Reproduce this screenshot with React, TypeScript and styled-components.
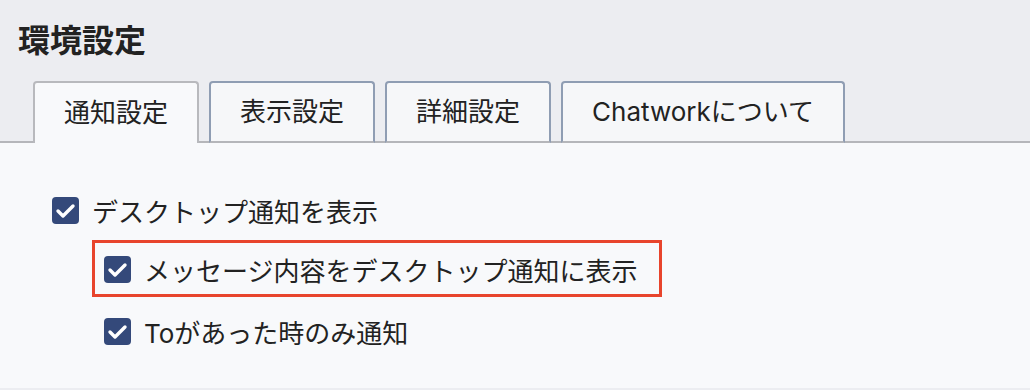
import styled, { createGlobalStyle } from "styled-components";

const GlobalStyle = createGlobalStyle`
  html, body {
    margin: 0;
    padding: 0;
    background: #ecedf1;
  }
  body {
    font-family: "Inter", "Noto Sans CJK JP", sans-serif;
    color: #222;
  }
`;

const tabs = ["通知設定", "表示設定", "詳細設定", "Chatworkについて"];

const CheckIcon = () => (
  <svg width="27" height="27" viewBox="0 0 27 27">
    <rect width="27" height="27" rx="4" fill="#34497a" />
    <path
      d="M6 14 L11 19 L21 9"
      fill="none"
      stroke="#fff"
      strokeWidth="3.4"
      strokeLinecap="round"
      strokeLinejoin="round"
    />
  </svg>
);

const App = () => {
  return (
    <Page>
      <GlobalStyle />
      <Header>
        <Title>環境設定</Title>
        <TabList>
          {tabs.map((t, i) => (
            <Tab key={t} $active={i === 0}>
              {t}
            </Tab>
          ))}
        </TabList>
      </Header>
      <Panel>
        <Option>
          <CheckIcon />
          <span>デスクトップ通知を表示</span>
        </Option>
        <SubOptions>
          <Highlight>
            <Option>
              <CheckIcon />
              <span>メッセージ内容をデスクトップ通知に表示</span>
            </Option>
          </Highlight>
          <Option $indent>
            <CheckIcon />
            <span>Toがあった時のみ通知</span>
          </Option>
        </SubOptions>
      </Panel>
    </Page>
  );
};

export default App;

const Page = styled.div`
  width: 1030px;
  height: 390px;
  overflow: hidden;
  display: flex;
  flex-direction: column;
`;

const Header = styled.header`
  padding: 14px 0 0 18px;
  display: flex;
  flex-direction: column;
`;

const Title = styled.h1`
  margin: 0;
  font-family: "Noto Sans CJK JP", sans-serif;
  font-size: 32px;
  font-weight: 700;
  line-height: 48px;
  color: #222;
`;

const TabList = styled.div`
  display: flex;
  gap: 10px;
  margin: 19px 0 0 15px;
  position: relative;
  z-index: 1;
`;

const Tab = styled.div<{ $active?: boolean }>`
  height: 62px;
  box-sizing: border-box;
  padding: 0 29px;
  display: flex;
  align-items: center;
  font-size: 26px;
  line-height: 1;
  border: 2px solid ${(p) => (p.$active ? "#b8b9bd" : "#8f9db3")};
  border-bottom: ${(p) => (p.$active ? "none" : "2px solid #b5b6ba")};
  border-radius: 4px 4px 0 0;
  background: ${(p) => (p.$active ? "#f8f9fb" : "#f6f7f9")};
  margin-bottom: -2px;
  color: #222;
  cursor: pointer;
`;

const Panel = styled.section`
  height: 247px;
  border-top: 2px solid #b5b6ba;
  background: #f8f9fb;
  padding: 39px 0 0 52px;
  box-sizing: border-box;
  display: flex;
  flex-direction: column;
`;

const Option = styled.label<{ $indent?: boolean }>`
  display: flex;
  align-items: center;
  gap: 13px;
  height: 57px;
  padding-left: ${(p) => (p.$indent ? "52px" : "0")};
  font-size: 26px;
  color: #222;
`;

const SubOptions = styled.div`
  display: flex;
  flex-direction: column;
  gap: 6px;
  margin-top: 1px;
`;

const Highlight = styled.div`
  align-self: flex-start;
  margin-left: 40px;
  border: 3px solid #e8442c;
  height: 57px;
  box-sizing: border-box;
  padding: 2px 22px 0 9px;
  display: flex;
  align-items: center;
`;
